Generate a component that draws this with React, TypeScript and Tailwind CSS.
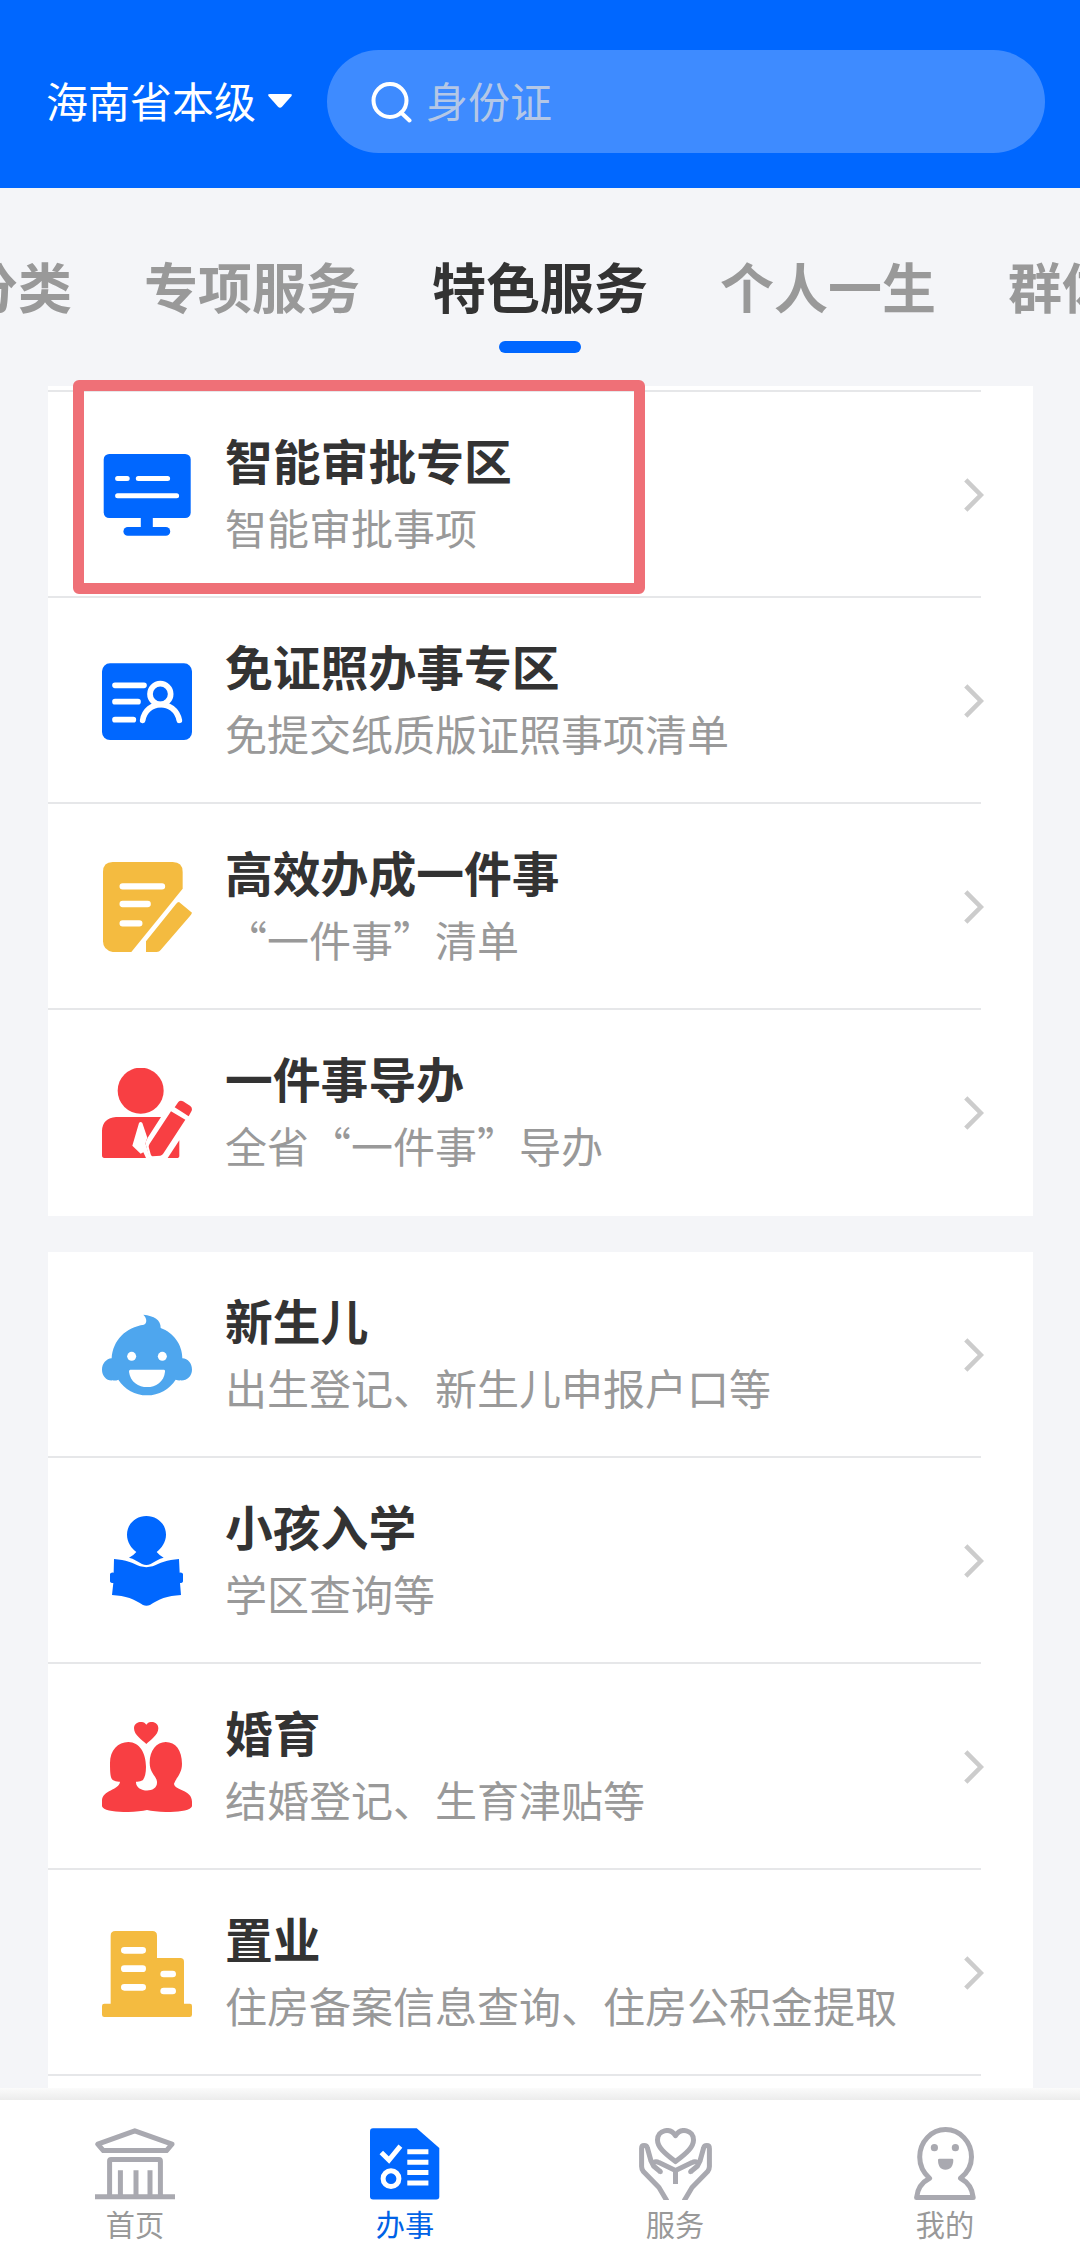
import type { ReactNode } from "react";

const MonitorIcon = () => (
  <svg viewBox="0 0 90 90" className="size-[90px]">
    <g fill="#0067ff">
      <rect x="1.7" y="4" width="87" height="64" rx="5.5" />
      <rect x="38.8" y="66" width="12" height="13" />
      <rect x="21.4" y="77" width="46.8" height="8.8" rx="4.4" />
    </g>
    <g stroke="#fff" strokeWidth="5" strokeLinecap="round">
      <path d="M15.6 28.6H25.2M36.3 28.6H65.6M15.6 45.8H74.6" />
    </g>
  </svg>
);

const IdCardIcon = () => (
  <svg viewBox="66 48 270 270" className="size-[90px]">
    <rect x="66" y="70" width="270" height="230" rx="24" fill="#0067ff" />
    <g fill="none" stroke="#fff" strokeWidth="17" strokeLinecap="round">
      <path d="M105 136H192M105 185H174M105 239H160" />
      <circle cx="241" cy="162" r="31" />
      <path d="M188 241C197 180 284 176 298 241" />
    </g>
  </svg>
);

const NoteIcon = () => (
  <svg viewBox="66 666 270 270" className="size-[90px]">
    <path d="M98 666H278Q308 666 308 696V746L154 936H98Q69 930 69 904V696Q69 666 98 666Z" fill="#f4bb40" />
    <path d="M297 786L336 818Q334 824 330 828L242 930Q238 936 230 936H198V904L288 792Q292 786 297 786Z" fill="#f4bb40" />
    <path d="M128 739H246M128 792H203M128 850H178" stroke="#fff" strokeWidth="19" strokeLinecap="round" />
  </svg>
);

const GuideIcon = () => (
  <svg viewBox="66 84 270 270" className="size-[90px]">
    <g fill="#f83f43">
      <circle cx="182" cy="152" r="69" />
      <path d="M108 231H243L203 293L196 308L208 354H73Q66 354 66 346V272Q68 234 108 231Z" />
      <path d="M298 301V347Q298 354 290 354H263Z" />
      <path d="M273 214L316 239L249 342Q246 346 241 347L217 349Q213 348 212 343L206 320Q206 315 209 311Z" />
      <path d="M284 202L295 186Q301 180 309 184L331 198Q338 204 335 212L326 229Z" />
    </g>
    <path d="M177 249Q182 243 187 249L202 293L196 310L210 354H198L190 337L182 341L157 317Z" fill="#fff" />
  </svg>
);

const BabyIcon = () => (
  <svg viewBox="66 60 270 270" className="size-[90px]">
    <path
      d="M190 74C222 77 243 90 242 114C280 127 307 164 307 205C324 206 336 220 336 239C336 259 319 273 301 271Q295 272 287 269C268 298 237 316 201 316C165 316 134 298 115 269Q106 273 98 271C80 273 66 258 66 239C66 221 79 206 95 205C98 151 138 111 192 104C201 100 202 86 190 74Z"
      fill="#4ea6ee"
    />
    <g fill="#fff">
      <circle cx="155" cy="199" r="13.5" />
      <circle cx="247" cy="199" r="13.5" />
      <path d="M151 239H252Q256 239 255 245C250 306 154 307 147 245Q147 239 151 239Z" />
    </g>
  </svg>
);

const ReaderIcon = () => (
  <svg viewBox="66 678 270 270" className="size-[90px]">
    <g fill="#0067ff">
      <path d="M199 678C232 678 258 702 258 734C258 756 244 775 230 786Q238 796 251 803C237 806 224 815 212 822Q199 828 186 822C174 815 161 806 147 803Q160 797 169 786C154 775 141 756 141 734C141 702 167 678 199 678Z" />
      <path d="M102 807C137 809 160 820 180 829Q199 834 218 829C238 820 262 809 297 807L299 848Q309 847 309 853V873Q309 879 300 879L303 915C262 917 235 928 210 945Q199 950 189 945C164 928 137 917 96 915L100 879Q90 879 90 873V853Q90 847 101 848Z" />
    </g>
  </svg>
);

const CoupleIcon = () => (
  <svg viewBox="66 96 270 270" className="size-[90px]">
    <g fill="#f83f43">
      <path d="M199 162C188 151 162 136 162 115C162 94 190 90 199 104C208 90 235 94 235 115C235 136 210 151 199 162Z" />
      <path d="M145 156C179 156 198 190 198 230C198 250 194 264 188 271Q180 276 168 275C166 308 234 312 231 275C229 257 209 249 209 218C209 181 230 156 257 156C287 156 306 181 306 221C306 250 290 261 282 281C284 302 336 298 336 335V349C330 370 236 369 201 360C166 369 71 370 66 349V333C66 299 118 301 120 275Q108 276 98 270C91 263 90 248 90 219C90 181 114 156 145 156Z" />
    </g>
  </svg>
);

const BuildingIcon = () => (
  <svg viewBox="66 714 270 270" className="size-[90px]">
    <path
      d="M106 723H217Q231 723 231 737V804H301Q312 804 312 815V941H330Q336 941 336 948V974Q336 981 329 981H73Q66 981 66 974V948Q66 941 73 941H92V737Q92 723 106 723Z"
      fill="#f4bb40"
    />
    <path d="M133 781H188M133 836H188M133 892H188M251 852H278M251 903H278" stroke="#fff" strokeWidth="20" strokeLinecap="round" />
  </svg>
);

const HomeIcon = () => (
  <svg viewBox="0 0 80 72" className="h-[72px] w-[80px]" fill="none" stroke="#a9a9b0" strokeWidth="5">
    <path d="M2.8 16.2L39.8 2.8L77 16.2L71.5 22.6H8.3Z" strokeLinejoin="round" />
    <path d="M14.6 67V33Q14.6 31.5 16 31.5H64Q65.4 31.5 65.4 33V67M25.4 42.3V67M41 42.3V67M55 42.3V67M0 68.8H80" />
  </svg>
);

const TasksIcon = () => (
  <svg viewBox="0 0 70 72" className="h-[72px] w-[70px]">
    <path d="M3 0.3H46.7L69.3 20V68.4Q69.3 71.4 66.3 71.4H3Q0 71.4 0 68.4V3.3Q0 .3 3 .3Z" fill="#0067ff" />
    <g fill="none" stroke="#fff" strokeWidth="5">
      <path d="M11.3 24.5L19 32L30.4 18.2M37.3 23.8H58.4M37.3 34.2H58.4M37.3 44.6H58.4M37.3 55H58.4" />
      <circle cx="21" cy="50.7" r="7.9" />
    </g>
  </svg>
);

const CareIcon = () => (
  <svg viewBox="0 0 73 72" className="h-[72px] w-[73px]" fill="none" stroke="#a9a9b0" strokeWidth="5" strokeLinejoin="round">
    <path d="M36.5 33.6C25 25 18.5 19 18.5 12C18.5 2 31 -1 36.5 7.6C42 -1 54.5 2 54.5 12C54.5 19 48 25 36.5 33.6Z" />
    <path d="M36.5 56V42.4L20 34.6Q17 33 14.5 34.6M36.5 42.4L53 34.6Q56 33 58.5 34.6" />
    <path d="M28 73L20 59.5L4.4 43.5Q2.6 41.4 2.6 38.5V20.5Q2.6 17.6 5.2 17.6Q7.8 17.6 8.4 20L12 33L14.5 38L21.5 43.8" />
    <path d="M45 73L53 59.5L68.6 43.5Q70.4 41.4 70.4 38.5V20.5Q70.4 17.6 67.8 17.6Q65.2 17.6 64.6 20L61 33L58.5 38L51.5 43.8" />
    <g fill="#a9a9b0" stroke="none">
      <circle cx="21.5" cy="43.8" r="2.4" />
      <circle cx="51.5" cy="43.8" r="2.4" />
    </g>
  </svg>
);

const ProfileIcon = () => (
  <svg viewBox="0 -1 62 73" className="h-[73px] w-[62px]">
    <path
      d="M2.6 69.5H59.2Q58 56.5 46.5 50.3Q57.5 41.5 57.5 29A25.9 27.4 0 0 0 5.7 29Q5.7 41.5 15.6 50.3Q3.8 56.5 2.6 69.5Z"
      fill="none"
      stroke="#a9a9b0"
      strokeWidth="5"
      strokeLinejoin="round"
    />
    <g fill="#a9a9b0">
      <circle cx="20.4" cy="19.7" r="3.6" />
      <circle cx="41.4" cy="19.7" r="3.6" />
      <path d="M25.5 30.7H38Q39.3 30.7 39.3 32C39.3 38 36.5 41.8 31.4 41.8C26.5 41.8 24 38 24 32Q24 30.7 25.5 30.7Z" />
    </g>
  </svg>
);

type Service = { icon: ReactNode; title: string; desc: string };

const zones: Service[] = [
  { icon: <MonitorIcon />, title: "智能审批专区", desc: "智能审批事项" },
  { icon: <IdCardIcon />, title: "免证照办事专区", desc: "免提交纸质版证照事项清单" },
  { icon: <NoteIcon />, title: "高效办成一件事", desc: "“一件事”清单" },
  { icon: <GuideIcon />, title: "一件事导办", desc: "全省“一件事”导办" },
];

const lifeEvents: Service[] = [
  { icon: <BabyIcon />, title: "新生儿", desc: "出生登记、新生儿申报户口等" },
  { icon: <ReaderIcon />, title: "小孩入学", desc: "学区查询等" },
  { icon: <CoupleIcon />, title: "婚育", desc: "结婚登记、生育津贴等" },
  { icon: <BuildingIcon />, title: "置业", desc: "住房备案信息查询、住房公积金提取" },
];

const tabs = ["事项分类", "专项服务", "特色服务", "个人一生", "群体服务"];

const navItems = [
  { icon: <HomeIcon />, label: "首页" },
  { icon: <TasksIcon />, label: "办事", active: true },
  { icon: <CareIcon />, label: "服务" },
  { icon: <ProfileIcon />, label: "我的" },
];

function ServiceRow({ item, divider, highlighted }: { item: Service; divider: boolean; highlighted?: boolean }) {
  return (
    <div className="relative h-[206px] pr-[52px]">
      <div className={`flex h-full items-center pl-[54px] ${divider ? "border-b-2 border-[#e6e7e9]" : "border-b-2 border-transparent"}`}>
        <div className="mt-0.5 shrink-0">{item.icon}</div>
        <div className="mb-[3px] ml-[33px] whitespace-nowrap">
          <div className="text-[47.8px] leading-[67px] font-bold text-[#333]">{item.title}</div>
          <div className="text-[42px] leading-[67px] text-[#999]">{item.desc}</div>
        </div>
      </div>
      <svg viewBox="0 0 20 34" className="absolute top-[86px] right-[49px] h-[34px] w-5" fill="none" stroke="#ccc" strokeWidth="4.6">
        <path d="M1.8 1.8L16.8 17L1.8 32.2" />
      </svg>
      {highlighted && (
        <div className="absolute -top-3 left-[25px] h-[214px] w-[572px] rounded-md border-[11px] border-[#ef7077]" />
      )}
    </div>
  );
}

export default function App() {
  return (
    <div className="flex h-[2256px] w-[1080px] flex-col overflow-hidden bg-[#f4f5f8] font-['Noto_Sans_CJK_SC',sans-serif]">
      <header className="flex h-[188px] shrink-0 items-center bg-[#0067ff] pt-[15px] pl-[46px]">
        <span className="mb-[3px] text-[42px] leading-[60px] text-white">海南省本级</span>
        <svg viewBox="0 0 26 16" className="mb-0.5 ml-[11px] h-4 w-[26px]">
          <path d="M3 1H23Q26 1 24.3 3.3L15 13.7Q13 15.8 11 13.7L1.7 3.3Q0 1 3 1Z" fill="#fff" />
        </svg>
        <div className="ml-[34px] flex h-[103px] w-[718px] items-center rounded-full bg-[#3e8bff] pl-11">
          <svg viewBox="0 0 42 42" className="size-[42px]" fill="none" stroke="#fff" strokeWidth="4">
            <circle cx="19" cy="19.5" r="16.5" />
            <path d="M30 31.5L38.5 39.5" strokeLinecap="round" />
          </svg>
          <span className="mb-[3px] ml-[13px] text-[42px] leading-[60px] text-[#b4c7e6]">身份证</span>
        </div>
      </header>

      <nav className="flex h-[198px] shrink-0 gap-[72px] pt-[58px]">
        {tabs.map((tab, i) => (
          <div key={tab} className={`flex w-[216px] shrink-0 flex-col items-center ${i === 0 ? "-ml-[144px]" : ""}`}>
            <span className={`text-[54px] leading-[80px] font-bold whitespace-nowrap ${tab === "特色服务" ? "text-[#333]" : "text-[#999]"}`}>
              {tab}
            </span>
            {tab === "特色服务" && <span className="mt-[15px] h-3 w-[82px] rounded-full bg-[#0067ff]" />}
          </div>
        ))}
      </nav>

      <main className="flex h-[1714px] shrink-0 flex-col gap-9 pl-12">
        <section className="w-[985px] shrink-0 bg-white pt-1">
          <div className="h-0.5 w-[933px] bg-[#e6e7e9]" />
          {zones.map((item, i) => (
            <ServiceRow key={item.title} item={item} divider={i < zones.length - 1} highlighted={i === 0} />
          ))}
        </section>
        <section className="w-[985px] shrink-0 bg-white pb-6">
          {lifeEvents.map((item) => (
            <ServiceRow key={item.title} item={item} divider />
          ))}
        </section>
      </main>

      <footer className="relative grid h-[156px] shrink-0 grid-cols-4 bg-white">
        <div className="absolute inset-x-0 -top-3 h-3 bg-linear-to-b from-[#fbfbfb] to-[#ececec]" />
        {navItems.map(({ icon, label, active }) => (
          <div key={label} className="flex flex-col items-center pt-7">
            <div className="flex h-[72px] items-end">{icon}</div>
            <span className={`mt-[3px] text-[29.2px] leading-10 ${active ? "text-[#0062e6]" : "text-[#999]"}`}>{label}</span>
          </div>
        ))}
      </footer>
    </div>
  );
}
